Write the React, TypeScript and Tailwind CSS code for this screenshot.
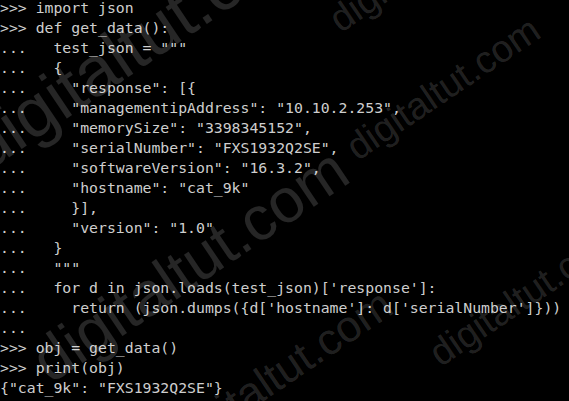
import React from "react";

const lines: string[] = [
  ">>> import json",
  ">>> def get_data():",
  '...   test_json = """',
  "...   {",
  '...     "response": [{',
  '...     "managementipAddress": "10.10.2.253",',
  '...     "memorySize": "3398345152",',
  '...     "serialNumber": "FXS1932Q2SE",',
  '...     "softwareVersion": "16.3.2",',
  '...     "hostname": "cat_9k"',
  "...     }],",
  '...     "version": "1.0"',
  "...   }",
  '...   """',
  "...   for d in json.loads(test_json)['response']:",
  "...     return (json.dumps({d['hostname']: d['serialNumber']}))",
  "...",
  ">>> obj = get_data()",
  ">>> print(obj)",
  '{"cat_9k": "FXS1932Q2SE"}',
];

const mark =
  "absolute -translate-x-1/2 -translate-y-1/2 rotate-[-34deg] leading-none whitespace-nowrap";

export default function App() {
  return (
    <div className="relative w-[569px] h-[401px] overflow-hidden bg-black">
      <div className="mt-[-2px] flex flex-col font-['DejaVu_Sans_Mono',monospace] text-[14.8px] text-[#cecece]">
        {lines.map((l, i) => (
          <div key={i} className="h-[20px] leading-[20px] whitespace-pre">
            {l}
          </div>
        ))}
      </div>
      <div className="pointer-events-none absolute inset-0 font-['Liberation_Sans',Arial,sans-serif] text-white/15">
        <span className={`${mark} left-[143px] top-[38px] text-[70px]`}>digitaltut.com</span>
        <span className={`${mark} left-[190px] top-[265px] text-[62px]`}>digitaltut.com</span>
        <span className={`${mark} left-[426px] top-[-40px] text-[38px]`}>digitaltut.com</span>
        <span className={`${mark} left-[443px] top-[88px] text-[38px]`}>digitaltut.com</span>
        <span className={`${mark} left-[526px] top-[294px] text-[38px]`}>digitaltut.com</span>
        <span className={`${mark} left-[280px] top-[372px] text-[44px]`}>digitaltut.com</span>
      </div>
    </div>
  );
}
